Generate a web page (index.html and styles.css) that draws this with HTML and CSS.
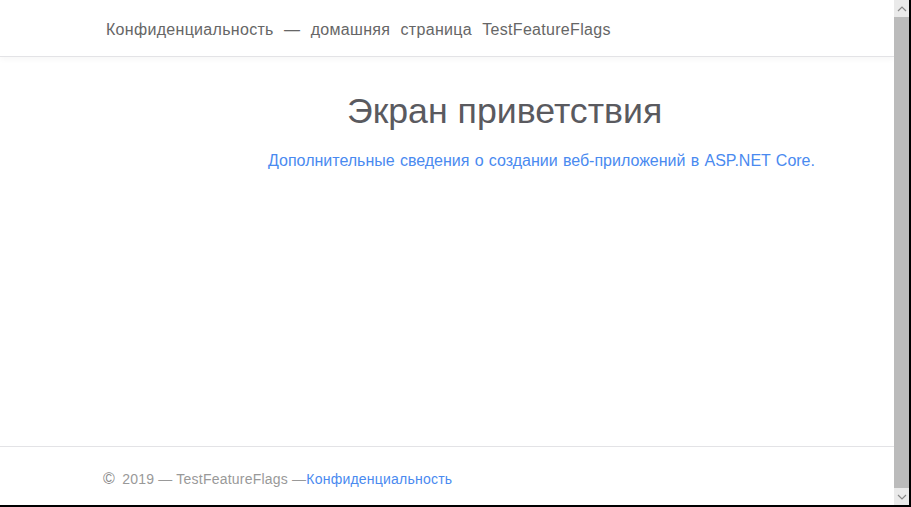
FILE: index.html
```html
<!DOCTYPE html>
<html lang="ru">
<head>
<meta charset="utf-8">
<title>Экран приветствия</title>
<link rel="stylesheet" href="styles.css">
</head>
<body>
<div class="window">
  <div class="page">
    <header class="topbar">
      <span class="brand">Конфиденциальность — домашняя страница TestFeatureFlags</span>
    </header>
    <main class="main">
      <h1 class="title">Экран приветствия</h1>
      <p class="lead"><a href="#" class="link">Дополнительные сведения о создании веб-приложений в ASP.NET Core.</a></p>
    </main>
    <footer class="footer">
      <span class="copy"><span class="c-sign">©</span> 2019 — TestFeatureFlags —</span><a href="#" class="link">Конфиденциальность</a>
    </footer>
  </div>
  <div class="scrollbar">
    <div class="sb-btn"><svg width="10" height="6" viewBox="0 0 10 6"><path d="M1 5 L5 1 L9 5" fill="none" stroke="#888" stroke-width="1.2"/></svg></div>
    <div class="sb-thumb"></div>
    <div class="sb-btn"><svg width="10" height="6" viewBox="0 0 10 6"><path d="M1 1 L5 5 L9 1" fill="none" stroke="#888" stroke-width="1.2"/></svg></div>
  </div>
</div>
</body>
</html>
```
FILE: styles.css
```css
html, body {
  margin: 0;
  padding: 0;
  background: #fff;
}
body {
  font-family: "Liberation Sans", Arial, sans-serif;
}
.window {
  width: 911px;
  height: 507px;
  box-sizing: border-box;
  display: flex;
  border-right: 2px solid #000;
  border-bottom: 2px solid #000;
  overflow: hidden;
}
.page {
  flex: 1;
  display: flex;
  flex-direction: column;
  min-width: 0;
}
.topbar {
  height: 57px;
  border-bottom: 1px solid #e3e3e6;
  box-shadow: 0 2px 6px rgba(0,0,0,0.04);
  display: flex;
  align-items: center;
  padding-left: 106px;
  padding-top: 3px;
  box-sizing: border-box;
}
.brand {
  font-size: 16px;
  color: #666;
  letter-spacing: 0.3px;
  word-spacing: 5.6px;
}
.main {
  flex: 1;
  display: flex;
  flex-direction: column;
}
.title {
  margin: 32px 0 0 347px;
  font-size: 35.7px;
  font-weight: normal;
  color: #5a5a5f;
  line-height: 44px;
}
.lead {
  margin: 19px 0 0 268px;
  font-size: 16px;
  word-spacing: 0.8px;
}
.link {
  color: #4a8af0;
  text-decoration: none;
}
.footer {
  height: 59px;
  border-top: 1px solid #e3e3e6;
  box-sizing: border-box;
  padding: 23px 0 0 103px;
  font-size: 14px;
  color: #999;
  letter-spacing: 0.22px;
}
.c-sign {
  font-size: 16px;
  color: #888;
  margin-right: 3px;
}
.scrollbar {
  width: 15px;
  background: #bbb;
  display: flex;
  flex-direction: column;
}
.sb-btn {
  height: 17px;
  background: #eaeaea;
  display: flex;
  align-items: center;
  justify-content: center;
}
.sb-thumb {
  flex: 1;
}
```
